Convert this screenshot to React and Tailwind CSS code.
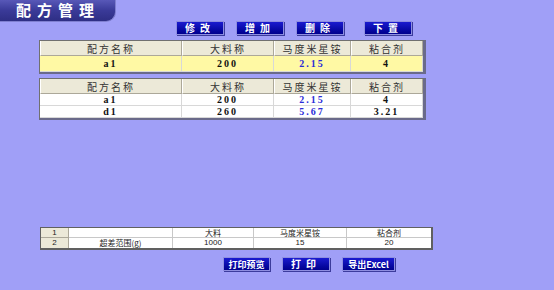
const CJK = { fontFamily: '"Noto Sans CJK SC", "Liberation Sans", sans-serif' }
const SANS = { fontFamily: '"Liberation Sans", "Noto Sans CJK SC", sans-serif' }
const SERIF = { fontFamily: '"Liberation Serif", "Noto Sans CJK SC", serif' }

const COLS = 'grid grid-cols-[142px_92px_77px_1fr]'
const BOTTOM_COLS = 'grid grid-cols-[28px_104px_81px_93px_1fr]'

function Btn({ children, w = 'w-[48px]', tight }) {
  return (
    <button
      className={`${w} h-[14px] flex items-center justify-center bg-gradient-to-b from-[#1a1ad0] to-[#00008c] border border-[#8e8ee0] shadow-[1px_1px_0_#3c3c9c] text-white font-bold ${tight ? 'text-[9px] tracking-[0px]' : 'text-[10px] tracking-[5px]'} leading-none`}
      style={CJK}
    >
      {children}
    </button>
  )
}

function HeadRow() {
  const heads = ['配方名称', '大料称', '马度米星铵', '粘合剂']
  return (
    <div className={COLS}>
      {heads.map(h => (
        <div
          key={h}
          className="h-[15px] flex items-center justify-center bg-[#ece9d8] border-r border-b border-[#aca899] border-l border-l-white text-[10px] text-[#333] tracking-[2px]"
          style={CJK}
        >
          {h}
        </div>
      ))}
    </div>
  )
}

function DataRow({ row, bg = 'bg-white', h = 'h-[12px]' }) {
  return (
    <div className={`${COLS} ${bg}`}>
      {row.map((v, i) => (
        <div
          key={i}
          className={`${h} flex items-center justify-center border-r border-b border-[#d8d8d8] text-[10px] font-bold tracking-[2px] ${i === 2 ? 'text-[#2b2bd8]' : 'text-[#111]'}`}
          style={SERIF}
        >
          {v}
        </div>
      ))}
    </div>
  )
}

export default function App() {
  return (
    <div className="w-[554px] h-[290px] bg-[#a09ff7] flex flex-col overflow-hidden">
      <div
        className="w-[116px] h-[22px] rounded-br-[10px] bg-gradient-to-b from-[#5858b8] via-[#3a3a98] to-[#2e2e84] border-r border-b border-[#7f7fd0] flex items-center pl-[16px] text-white text-[15px] font-bold tracking-[6px] shrink-0"
        style={CJK}
      >
        配方管理
      </div>

      <div className="flex pl-[176px] -mt-[1px] shrink-0">
        <Btn>修改</Btn>
        <div className="ml-[12px]"><Btn>增加</Btn></div>
        <div className="ml-[12px]"><Btn>删除</Btn></div>
        <div className="ml-[20px]"><Btn>下置</Btn></div>
      </div>

      <div className="ml-[39px] mt-[5px] w-[387px] border border-[#707070] border-r-[3px] border-b-[2px] border-r-[#6a6a8a] border-b-[#6a6a8a] shrink-0">
        <HeadRow />
        <DataRow row={['a1', '200', '2.15', '4']} bg="bg-[#fff9a4]" h="h-[16px]" />
      </div>

      <div className="ml-[39px] mt-[4px] w-[387px] border border-[#707070] border-r-[3px] border-b-[2px] border-r-[#6a6a8a] border-b-[#6a6a8a] shrink-0">
        <HeadRow />
        <DataRow row={['a1', '200', '2.15', '4']} />
        <DataRow row={['d1', '260', '5.67', '3.21']} />
      </div>

      <div className="flex-1" />

      <div className="ml-[40px] w-[393px] border border-[#606060] border-r-[2px] border-b-[2px] bg-white text-[8px] leading-[8px] text-[#222] shrink-0" style={CJK}>
        <div className={`${BOTTOM_COLS} h-[10px]`}>
          <div className="flex items-center justify-center bg-[#ece9d8] border-r border-b border-[#aca899]" style={SANS}>1</div>
          <div className="border-r border-b border-[#c8c8c8]" />
          <div className="flex items-center justify-center border-r border-b border-[#c8c8c8]">大料</div>
          <div className="flex items-center justify-center border-r border-b border-[#c8c8c8]">马度米星铵</div>
          <div className="flex items-center justify-center border-b border-[#c8c8c8]">粘合剂</div>
        </div>
        <div className={`${BOTTOM_COLS} h-[10px]`}>
          <div className="flex items-center justify-center bg-[#ece9d8] border-r border-[#aca899]" style={SANS}>2</div>
          <div className="flex items-center justify-center border-r border-[#c8c8c8]">超差范围(g)</div>
          <div className="flex items-center justify-center border-r border-[#c8c8c8]" style={SANS}>1000</div>
          <div className="flex items-center justify-center border-r border-[#c8c8c8]" style={SANS}>15</div>
          <div className="flex items-center justify-center" style={SANS}>20</div>
        </div>
      </div>

      <div className="flex pl-[223px] mt-[7px] mb-[19px] shrink-0">
        <Btn w="w-[47px]" tight>打印预览</Btn>
        <div className="ml-[12px]"><Btn>打印</Btn></div>
        <div className="ml-[12px]"><Btn w="w-[53px]" tight>导出Excel</Btn></div>
      </div>
    </div>
  )
}
